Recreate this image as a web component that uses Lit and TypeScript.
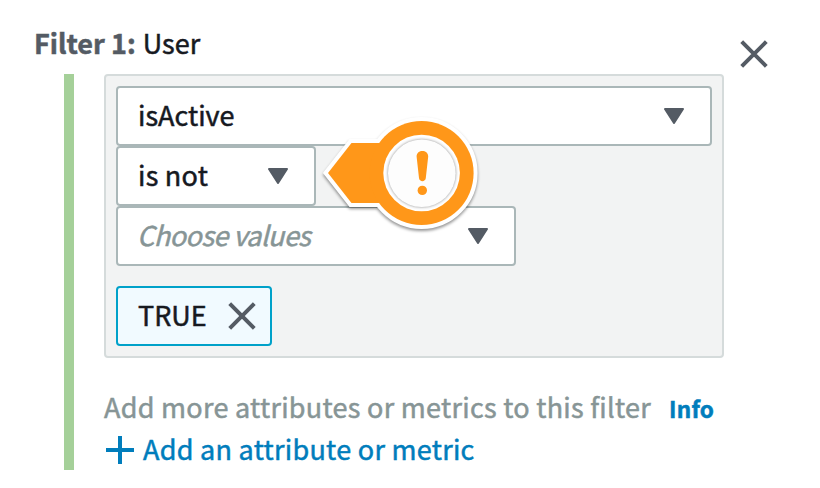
import { LitElement, html, css } from "lit";
import { customElement, property } from "lit/decorators.js";

const cross = html`<svg width="28" height="28" viewBox="0 0 28 28">
  <path d="M1.7 1.7 L26.3 26.3 M26.3 1.7 L1.7 26.3" fill="none" stroke="#545b64" stroke-width="4" />
</svg>`;

@customElement("select-box")
export class SelectBox extends LitElement {
  @property() label = "";
  @property({ type: Boolean, reflect: true }) placeholder = false;

  static styles = css`
    :host {
      box-sizing: border-box;
      display: flex;
      align-items: center;
      justify-content: space-between;
      height: 60px;
      padding: 0 26px 0 20px;
      border: 2px solid #aab7b8;
      border-radius: 4px;
      background: #fff;
      color: #16191f;
    }
    :host([placeholder]) {
      color: #879596;
      font-style: italic;
      letter-spacing: -0.55px;
      -webkit-text-stroke-width: 0.5px;
    }
    :host([placeholder]) span { margin-left: -1px; }
    span { padding-bottom: 2px; }
    svg { display: block; }
  `;

  render() {
    return html`<span>${this.label}</span>
      <svg width="20" height="16" viewBox="0 0 20 16">
        <path d="M1 1 H19 L10 15 Z" fill="#545b64" stroke="#545b64" stroke-width="2" stroke-linejoin="round" />
      </svg>`;
  }
}

@customElement("warning-marker")
export class WarningMarker extends LitElement {
  static styles = css`
    :host { display: block; }
    svg { display: block; overflow: visible; }
    .outline { filter: drop-shadow(0 2px 1.5px rgba(0, 0, 0, 0.42)); }
    .face { filter: drop-shadow(0 0 1.5px rgba(0, 0, 0, 0.45)); }
  `;

  render() {
    return html`<svg width="160" height="120" viewBox="320 113 160 120">
      <g class="outline" fill="#fff" stroke="#fff" stroke-width="8">
        <path d="M328 173 L351.5 143 H400 V203 H351.5 Z" />
        <circle cx="421.6" cy="173" r="52" />
      </g>
      <g fill="#ff9719">
        <path d="M328 173 L351.5 143 H400 V203 H351.5 Z" />
        <circle cx="421.6" cy="173" r="52" />
      </g>
      <circle cx="421.6" cy="173" r="38.3" fill="#fff" />
      <circle class="face" cx="421.8" cy="173.3" r="33.8" fill="#fdfdfd" />
      <path
        d="M416.6 156.5 C416.6 149.2 428.2 149.2 428.2 156.5 L425.8 178 C425.4 182.2 419.4 182.2 419 178 Z"
        fill="#ff9719"
      />
      <circle cx="422.3" cy="190.4" r="4.7" fill="#ff9719" />
    </svg>`;
  }
}

@customElement("app-root")
export class AppRoot extends LitElement {
  static styles = css`
    :host {
      box-sizing: border-box;
      display: block;
      width: 820px;
      height: 488px;
      padding-top: 24px;
      background: #fff;
      color: #16191f;
      font: 27px/40px "Noto Sans CJK SC", "Noto Sans", sans-serif;
      white-space: nowrap;
      -webkit-text-stroke: 0.5px currentColor;
    }
    svg { display: block; }
    header {
      display: flex;
      justify-content: space-between;
      height: 50px;
      padding: 0 52px 0 34px;
    }
    header svg { margin-top: 16px; }
    .title { margin-top: -1px; }
    b {
      color: #545b64;
      -webkit-text-stroke-color: #545b64;
    }
    .user { margin-left: 1px; }
    .body {
      display: flex;
      box-sizing: border-box;
      height: 396px;
      margin-left: 64px;
      border-left: 10px solid #a5d099;
      padding-left: 30px;
      flex-direction: column;
      align-items: flex-start;
    }
    .panel {
      position: relative;
      box-sizing: border-box;
      width: 620px;
      height: 284px;
      padding: 10px;
      border: 2px solid #d5dbdb;
      border-radius: 4px;
      background: #f2f3f3;
    }
    .operator {
      width: 200px;
      letter-spacing: 0.25px;
    }
    .values { width: 400px; }
    warning-marker {
      position: absolute;
      left: 214px;
      top: 37px;
    }
    .token {
      display: flex;
      box-sizing: border-box;
      align-items: center;
      justify-content: space-between;
      width: 156px;
      height: 60px;
      margin-top: 20px;
      padding: 0 14px 0 20px;
      border: 2px solid #00a1c9;
      border-radius: 4px;
      background: #f1faff;
    }
    .token span { padding-bottom: 2px; }
    .hint {
      display: flex;
      align-items: center;
      gap: 18px;
      height: 40px;
      margin: 29px 0 3px;
      color: #879596;
      letter-spacing: 0.28px;
    }
    .info {
      padding-top: 2px;
      color: #007dbc;
      font-size: 22.5px;
      font-weight: 700;
    }
    .add {
      display: flex;
      align-items: center;
      gap: 9px;
      height: 40px;
      padding-left: 2px;
      color: #007dbc;
      letter-spacing: 0.28px;
    }
    .add span { padding-bottom: 2px; }
  `;

  render() {
    return html`
      <header>
        <div class="title"><b>Filter 1:</b> <span class="user">User</span></div>
        ${cross}
      </header>
      <div class="body">
        <div class="panel">
          <select-box label="isActive"></select-box>
          <select-box class="operator" label="is not"></select-box>
          <select-box class="values" label="Choose values" placeholder></select-box>
          <div class="token"><span>TRUE</span>${cross}</div>
          <warning-marker></warning-marker>
        </div>
        <div class="hint">
          <span>Add more attributes or metrics to this filter</span>
          <span class="info">Info</span>
        </div>
        <div class="add">
          <svg width="28" height="28" viewBox="0 0 28 28">
            <path d="M14 0 V28 M0 14 H28" stroke="#007dbc" stroke-width="4" />
          </svg>
          <span>Add an attribute or metric</span>
        </div>
      </div>
    `;
  }
}
